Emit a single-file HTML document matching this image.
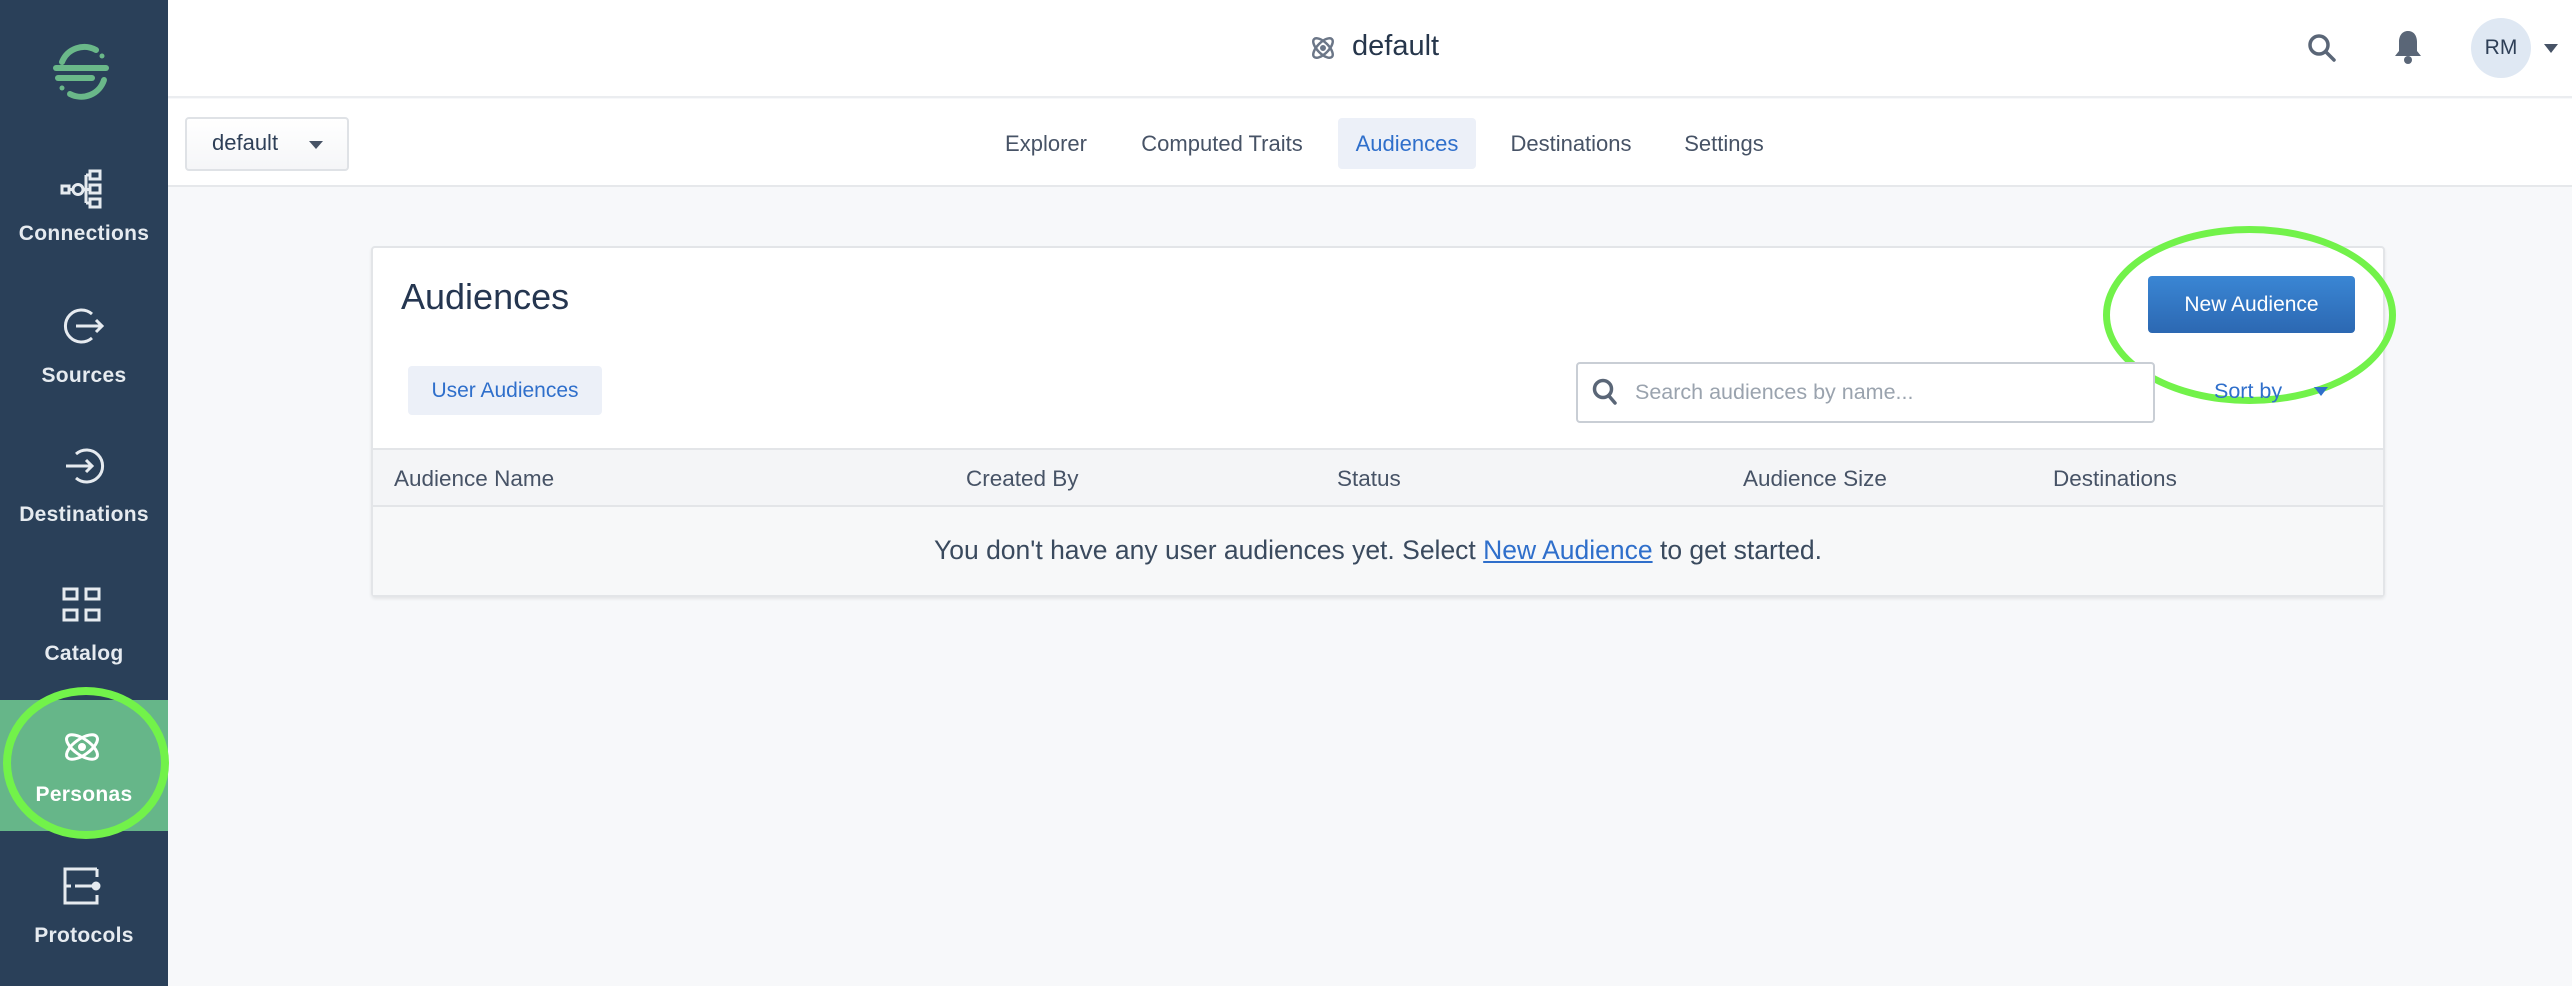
<!DOCTYPE html>
<html><head><meta charset="utf-8"><style>
*{box-sizing:border-box;margin:0;padding:0}
body{width:2572px;height:986px;overflow:hidden;background:#f7f8fa;font-family:"Liberation Sans",sans-serif;position:relative;color:#2e3f57}
.abs{position:absolute}
.side{left:0;top:0;width:168px;height:986px;background:#2a4059}
.item{position:absolute;left:0;width:168px;text-align:center;color:#e6ebf0;font-size:21px;font-weight:bold;letter-spacing:0.3px}
.top{left:168px;top:0;width:2404px;height:98px;background:#fff;border-bottom:2px solid #ebedf0}
.sub{left:168px;top:99px;width:2404px;height:88px;background:#fff;border-bottom:2px solid #e6e8eb}
.tab{position:absolute;top:118px;height:51px;line-height:51px;font-size:22px;color:#475366;transform:translateX(-50%)}
.card{left:371px;top:246px;width:2014px;height:351px;background:#fff;border:2px solid #e3e5e8;border-radius:4px;box-shadow:0 2px 3px rgba(0,0,0,.08)}
.th{position:absolute;top:466px;font-size:22.5px;color:#475366}
</style></head><body>
<div class="abs side"></div>
<svg class="abs" style="left:52px;top:42px" width="60" height="60" viewBox="0 0 60 60" fill="none" stroke="#6ab889" stroke-width="6" stroke-linecap="round">
<path d="M10 20 A24 24 0 0 1 44 8"/><path d="M52 38 A24 24 0 0 1 18 52"/><path d="M4 26 H54"/><path d="M6 36 H40"/><circle cx="50" cy="14" r="2.5" fill="#6ab889" stroke="none"/><circle cx="10" cy="46" r="2.5" fill="#6ab889" stroke="none"/></svg>
<svg class="abs" style="left:60px;top:168px" width="44" height="44" viewBox="0 0 44 44" fill="none" stroke="#e6ebf0" stroke-width="3"><rect x="2" y="18" width="7" height="7"/><circle cx="18" cy="21.5" r="5"/><rect x="30" y="3" width="10" height="8"/><rect x="30" y="17" width="10" height="8"/><rect x="30" y="31" width="10" height="8"/><path d="M9 21.5h4M23 21.5h7M26 7v28M26 7h4M26 35h4"/></svg>
<div class="item" style="top:222px">Connections</div>
<svg class="abs" style="left:62px;top:304px" width="44" height="44" viewBox="0 0 44 44" fill="none" stroke="#e6ebf0" stroke-width="3"><path d="M30 10 A16 16 0 1 0 30 34"/><path d="M14 22h26M34 16l6 6-6 6"/></svg>
<div class="item" style="top:364px">Sources</div>
<svg class="abs" style="left:62px;top:444px" width="44" height="44" viewBox="0 0 44 44" fill="none" stroke="#e6ebf0" stroke-width="3"><path d="M14 10 A16 16 0 1 1 14 34"/><path d="M4 22h26M24 16l6 6-6 6"/></svg>
<div class="item" style="top:503px">Destinations</div>
<svg class="abs" style="left:62px;top:586px" width="40" height="40" viewBox="0 0 40 40" fill="none" stroke="#e6ebf0" stroke-width="3"><rect x="2" y="3" width="13" height="10"/><rect x="24" y="3" width="13" height="10"/><rect x="2" y="24" width="13" height="10"/><rect x="24" y="24" width="13" height="10"/></svg>
<div class="item" style="top:642px">Catalog</div>
<div class="abs" style="left:0;top:700px;width:168px;height:131px;background:#66b689"></div>
<svg class="abs" style="left:62px;top:727px" width="40" height="40" viewBox="0 0 40 40" fill="none" stroke="#fff" stroke-width="3"><ellipse cx="20" cy="20" rx="18" ry="8" transform="rotate(35 20 20)"/><ellipse cx="20" cy="20" rx="18" ry="8" transform="rotate(-35 20 20)"/><circle cx="20" cy="20" r="2.5" fill="#fff"/></svg>
<div class="item" style="top:783px;color:#fff">Personas</div>
<div class="abs" style="left:3px;top:687px;width:166px;height:152px;border:8px solid #72f24a;border-radius:50%"></div>
<svg class="abs" style="left:62px;top:866px" width="40" height="40" viewBox="0 0 40 40" fill="none" stroke="#e6ebf0" stroke-width="3"><path d="M35 3H3v34h32v-8M35 3v8"/><path d="M3 20h6M13 20h20"/><circle cx="34" cy="20" r="3" fill="#e6ebf0"/></svg>
<div class="item" style="top:924px">Protocols</div>

<div class="abs top"></div>
<svg class="abs" style="left:1309px;top:34px" width="28" height="28" viewBox="0 0 40 40" fill="none" stroke="#6b7687" stroke-width="3.5"><ellipse cx="20" cy="20" rx="18" ry="8" transform="rotate(45 20 20)"/><ellipse cx="20" cy="20" rx="18" ry="8" transform="rotate(-45 20 20)"/><circle cx="20" cy="20" r="2.5" fill="#6b7687"/></svg>
<div class="abs" style="left:1352px;top:30px;font-size:29px;color:#26364b">default</div>
<svg class="abs" style="left:2307px;top:33px" width="30" height="30" viewBox="0 0 30 30" fill="none" stroke="#5a6677" stroke-width="3.5"><circle cx="12" cy="12" r="9"/><path d="M19 19l8 8" stroke-linecap="round"/></svg>
<svg class="abs" style="left:2393px;top:29px" width="30" height="36" viewBox="0 0 30 36" fill="#5a6677"><path d="M15 2c-6 0-9 5-9 11v9l-4 5h26l-4-5v-9c0-6-3-11-9-11z"/><circle cx="15" cy="31" r="4"/></svg>
<div class="abs" style="left:2471px;top:18px;width:60px;height:60px;border-radius:50%;background:#dfe8f3;text-align:center;line-height:60px;font-size:21px;color:#2e3f57">RM</div>
<div class="abs" style="left:2544px;top:44px;border-left:7px solid transparent;border-right:7px solid transparent;border-top:9px solid #475366"></div>

<div class="abs sub"></div>
<div class="abs" style="left:185px;top:117px;width:164px;height:54px;border:2px solid #dfe2e6;border-radius:4px;background:linear-gradient(#fff,#f5f6f8)"></div>
<div class="abs" style="left:212px;top:130px;font-size:22px;color:#2e3f57">default</div>
<div class="abs" style="left:309px;top:141px;border-left:7px solid transparent;border-right:7px solid transparent;border-top:8px solid #475366"></div>
<div class="abs" style="left:1338px;top:118px;width:138px;height:51px;background:#ecf0f8;border-radius:4px"></div>
<div class="tab" style="left:1046px">Explorer</div>
<div class="tab" style="left:1222px">Computed Traits</div>
<div class="tab" style="left:1407px;color:#2f6fcb">Audiences</div>
<div class="tab" style="left:1571px">Destinations</div>
<div class="tab" style="left:1724px">Settings</div>

<div class="abs card"></div>
<div class="abs" style="left:401px;top:276px;font-size:36px;color:#253650">Audiences</div>
<div class="abs" style="left:2148px;top:276px;width:207px;height:57px;border-radius:4px;background:linear-gradient(#3a86d4,#2c68b2);color:#fff;font-size:21px;text-align:center;line-height:57px">New Audience</div>
<div class="abs" style="left:2103px;top:226px;width:293px;height:178px;border:7px solid #72f24a;border-radius:50%"></div>
<div class="abs" style="left:408px;top:366px;width:194px;height:49px;background:#ecf0f8;border-radius:4px;color:#2f6fcb;font-size:21px;text-align:center;line-height:49px">User Audiences</div>
<div class="abs" style="left:1576px;top:362px;width:579px;height:61px;border:2px solid #c9ced5;border-radius:4px;background:#fff"></div>
<svg class="abs" style="left:1592px;top:378px" width="26" height="28" viewBox="0 0 26 28" fill="none" stroke="#5a6677" stroke-width="3.5"><circle cx="11" cy="11" r="8.5"/><path d="M17 18l6 7" stroke-linecap="round"/></svg>
<div class="abs" style="left:1635px;top:380px;font-size:21.5px;color:#9aa3ae">Search audiences by name...</div>
<div class="abs" style="left:2214px;top:379px;font-size:21.5px;color:#2f6fcb">Sort by</div>
<div class="abs" style="left:2314px;top:387px;border-left:7px solid transparent;border-right:7px solid transparent;border-top:9px solid #2f6fcb"></div>
<div class="abs" style="left:373px;top:448px;width:2010px;height:59px;background:#f4f5f7;border-top:2px solid #e3e5e8;border-bottom:2px solid #e3e5e8"></div>
<div class="th" style="left:394px">Audience Name</div>
<div class="th" style="left:966px">Created By</div>
<div class="th" style="left:1337px">Status</div>
<div class="th" style="left:1743px">Audience Size</div>
<div class="th" style="left:2053px">Destinations</div>
<div class="abs" style="left:373px;top:507px;width:2010px;height:88px;background:#f7f8f9"></div>
<div class="abs" style="left:373px;top:535px;width:2010px;text-align:center;font-size:26.5px;color:#3a4a5e">You don't have any user audiences yet. Select <span style="color:#2f6fcb;text-decoration:underline">New Audience</span> to get started.</div>
</body></html>
